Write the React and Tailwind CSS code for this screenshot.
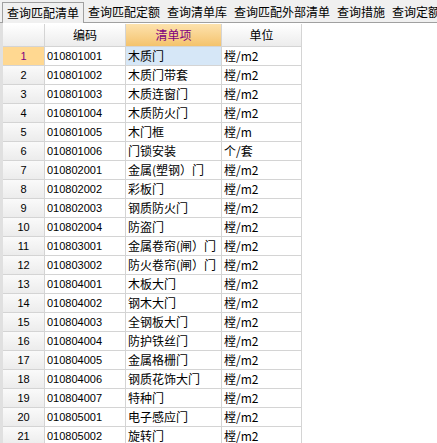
const TABS = ['查询匹配清单', '查询匹配定额', '查询清单库', '查询匹配外部清单', '查询措施', '查询定额'];

const ROWS = [
  ['010801001', '木质门', '樘/m2'],
  ['010801002', '木质门带套', '樘/m2'],
  ['010801003', '木质连窗门', '樘/m2'],
  ['010801004', '木质防火门', '樘/m2'],
  ['010801005', '木门框', '樘/m'],
  ['010801006', '门锁安装', '个/套'],
  ['010802001', '金属(塑钢）门', '樘/m2'],
  ['010802002', '彩板门', '樘/m2'],
  ['010802003', '钢质防火门', '樘/m2'],
  ['010802004', '防盗门', '樘/m2'],
  ['010803001', '金属卷帘(闸）门', '樘/m2'],
  ['010803002', '防火卷帘(闸）门', '樘/m2'],
  ['010804001', '木板大门', '樘/m2'],
  ['010804002', '钢木大门', '樘/m2'],
  ['010804003', '全钢板大门', '樘/m2'],
  ['010804004', '防护铁丝门', '樘/m2'],
  ['010804005', '金属格栅门', '樘/m2'],
  ['010804006', '钢质花饰大门', '樘/m2'],
  ['010804007', '特种门', '樘/m2'],
  ['010805001', '电子感应门', '樘/m2'],
  ['010805002', '旋转门', '樘/m2'],
];

const FONT = { fontFamily: '"Noto Sans CJK SC", "Liberation Sans", sans-serif' };
const LATIN = { fontFamily: '"Liberation Sans", sans-serif' };
const cell = 'border-r border-b border-[#d4d4d4] overflow-hidden whitespace-nowrap';

export default function App() {
  return (
    <div className="w-[437px] h-[443px] overflow-hidden bg-white text-[12px] text-black" style={FONT}>
      {/* tab strip */}
      <div className="flex h-[23px] bg-[#f0f0f0] border-b border-[#a0a0a0] pl-[2px] pt-[2px] leading-[20px]">
        {TABS.map((t, i) => (
          <div
            key={t}
            className={
              i === 0
                ? 'px-[4px] border border-b-0 border-[#a0a0a0] bg-[#f0f0f0] h-[21px] -mb-px shrink-0'
                : 'px-[3px] ml-[1px] shrink-0'
            }
          >
            {t}
          </div>
        ))}
      </div>

      {/* grid */}
      <div className="flex h-[420px] border-l-[3px] border-[#e0e0e0]">
        <div className="flex flex-col pt-px">
          <div className="flex h-[23px] leading-[22px] text-center">
            <div className={`${cell} w-[42px] bg-gradient-to-b from-[#ffffff] to-[#ececec]`}></div>
            <div className={`${cell} w-[81px] bg-gradient-to-b from-[#ffffff] to-[#ececec]`}>编码</div>
            <div className={`${cell} w-[96px] bg-gradient-to-b from-[#fde2ad] to-[#f4c36c] text-[#800080]`}>清单项</div>
            <div className={`${cell} w-[80px] bg-gradient-to-b from-[#ffffff] to-[#ececec]`}>单位</div>
          </div>
          {ROWS.map(([code, name, unit], i) => {
            const sel = i === 0;
            return (
              <div key={code} className="flex h-[19px] leading-[18px]">
                <div
                  className={`${cell} w-[42px] text-center text-[11px] ${
                    sel ? 'bg-[#ffd891] text-[#800080]' : 'bg-gradient-to-b from-[#fafafa] to-[#ececec]'
                  }`}
                  style={LATIN}
                >
                  {i + 1}
                </div>
                <div className={`${cell} w-[81px] pl-[2px] text-[11px]`} style={LATIN}>
                  {code}
                </div>
                <div className={`${cell} w-[96px] pl-[2px] ${sel ? 'bg-[#d6e7f7]' : ''}`}>{name}</div>
                <div className={`${cell} w-[80px] pl-[2px]`}>{unit}</div>
              </div>
            );
          })}
        </div>
      </div>
    </div>
  );
}
